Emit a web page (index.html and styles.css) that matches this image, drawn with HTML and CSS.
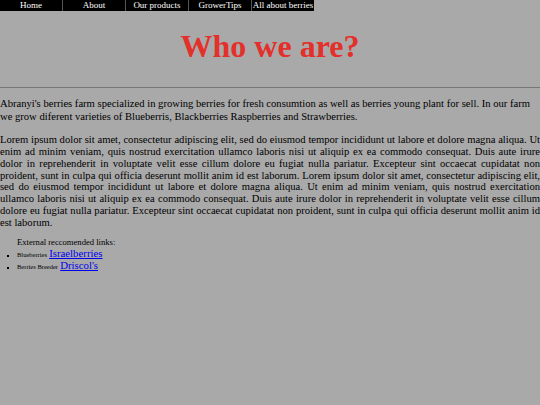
FILE: index.html
```html
<!DOCTYPE html>
<html>
<head>
<meta charset="utf-8">
<link rel="stylesheet" href="styles.css">
</head>
<body>
<nav class="nav">
  <a class="nav-item" href="#">Home</a>
  <a class="nav-item" href="#">About</a>
  <a class="nav-item" href="#">Our products</a>
  <a class="nav-item" href="#">GrowerTips</a>
  <a class="nav-item" href="#">All about berries</a>
</nav>
<h1 class="title">Who we are?</h1>
<hr class="rule">
<p class="text intro">Abranyi's berries farm specialized in growing berries for fresh consumtion as well as berries young plant for sell. In our farm we grow diferent varieties of Blueberris, Blackberries Raspberries and Strawberries.</p>
<p class="text justify">Lorem ipsum dolor sit amet, consectetur adipiscing elit, sed do eiusmod tempor incididunt ut labore et dolore magna aliqua. Ut enim ad minim veniam, quis nostrud exercitation ullamco laboris nisi ut aliquip ex ea commodo consequat. Duis aute irure dolor in reprehenderit in voluptate velit esse cillum dolore eu fugiat nulla pariatur. Excepteur sint occaecat cupidatat non proident, sunt in culpa qui officia deserunt mollit anim id est laborum. Lorem ipsum dolor sit amet, consectetur adipiscing elit, sed do eiusmod tempor incididunt ut labore et dolore magna aliqua. Ut enim ad minim veniam, quis nostrud exercitation ullamco laboris nisi ut aliquip ex ea commodo consequat. Duis aute irure dolor in reprehenderit in voluptate velit esse cillum dolore eu fugiat nulla pariatur. Excepteur sint occaecat cupidatat non proident, sunt in culpa qui officia deserunt mollit anim id est laborum.</p>
<div class="links">
  <div class="links-title">External reccomended links:</div>
  <ul class="link-list">
    <li><span class="small">Blueberries</span> <a class="ext" href="#">Israelberries</a></li>
    <li><span class="small">Berries Breeder</span> <a class="ext" href="#">Driscol's</a></li>
  </ul>
</div>
</body>
</html>
```
FILE: styles.css
```css
html, body {
  margin: 0;
  padding: 0;
  background: #a9a9a9;
  font-family: "Liberation Serif", "Times New Roman", serif;
  color: #000;
}
.nav {
  display: flex;
  width: 314px;
}
.nav-item {
  display: block;
  width: 62px;
  height: 11px;
  line-height: 11px;
  background: #000;
  color: #fff;
  text-decoration: none;
  text-align: center;
  font-size: 9px;
  border-right: 1px solid #555;
}
.nav-item:last-child {
  border-right: none;
}
.title {
  margin: 17px 0 0;
  text-align: center;
  color: #e3302b;
  font-size: 32px;
  line-height: 37px;
  font-weight: bold;
}
.rule {
  margin: 22px 0 0;
  border: none;
  border-top: 1px solid #777;
  height: 0;
}
.text {
  font-size: 10.6px;
  line-height: 11.85px;
  margin: 8px 0 0;
}
.intro {
  line-height: 13px;
  margin-top: 9px;
}
.text + .text {
  margin-top: 11px;
}
.justify {
  text-align: justify;
}
.links {
  margin-top: 7px;
  padding-left: 17px;
  font-size: 8.6px;
}
.links-title {
  line-height: 12px;
}
.link-list {
  margin: 0;
  list-style: square;
  margin-left: -8px;
  padding-left: 8px;
}
.link-list li {
  line-height: 12px;
  height: 12px;
}
.link-list li::marker {
  font-size: 6px;
}
.small {
  font-size: 6.5px;
  line-height: 1;
}
.ext {
  color: #0000ee;
  font-size: 10.8px;
  line-height: 1;
}
```
